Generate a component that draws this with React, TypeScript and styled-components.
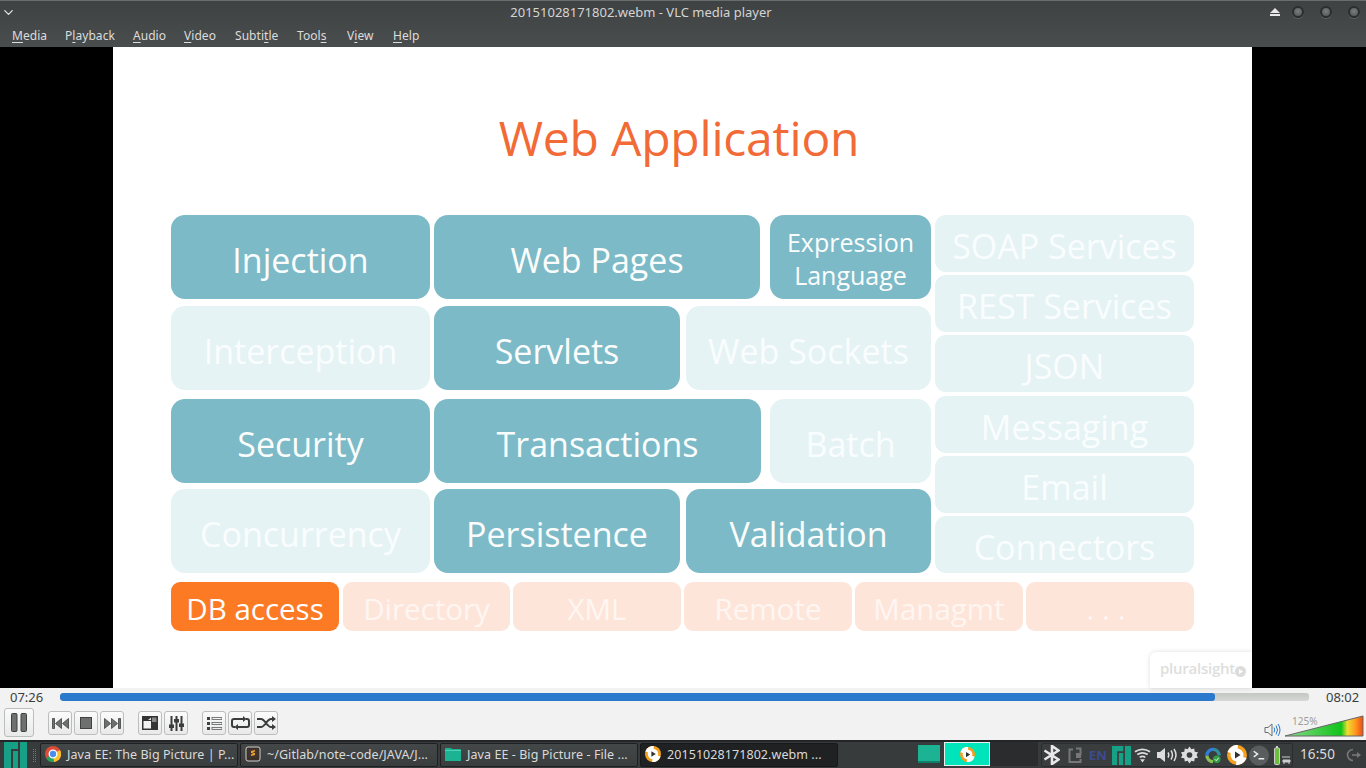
import React from 'react';
import styled, { createGlobalStyle } from 'styled-components';
import { ChevronDown } from 'lucide-react';

const Global = createGlobalStyle`
  html, body { margin: 0; padding: 0; height: 100%; overflow: hidden; background: #000; }
  #root { height: 100%; }
  * { box-sizing: border-box; }
`;
const UI = `"Noto Sans", "Liberation Sans", sans-serif`;
const SLIDE = `"Open Sans", "Noto Sans", sans-serif`;

const Page = styled.div`display:flex;flex-direction:column;width:1366px;height:768px;font-family:${UI};`;

const Header = styled.header`height:47px;background:linear-gradient(#3f4243,#4a4d4e);border-top:1px solid #6a6d6e;color:#e0e0e0;display:flex;flex-direction:column;`;
const TitleBar = styled.div`height:22px;display:flex;align-items:center;padding:0 0 0 1px;`;
const TitleText = styled.div`flex:1;text-align:center;font-size:13px;color:#d4d4d4;padding-right:4px;letter-spacing:-.01px;`;
const WinControls = styled.div`display:flex;align-items:center;gap:16px;padding-right:6px;`;
const Eject = styled.svg`margin-right:-4px;`;
const WinDot = styled.span`width:12px;height:12px;border-radius:50%;background:radial-gradient(circle at 50% 40%,#7a7d7e,#505354);border:2px solid #2b2d2e;box-shadow:0 1px 0 #5d6061;`;
const MenuBar = styled.nav`display:flex;padding:4px 0 0 12px;font-size:12px;color:#dcdcdc;`;
const MenuItem = styled.span<{ $w?: number }>`display:block;width:${p => (p.$w ? `${p.$w}px` : 'auto')};letter-spacing:.05px;`;
const Mn = styled.span`text-decoration:underline;text-underline-offset:2px;`;

const Stage = styled.main`height:641px;background:#000;display:flex;justify-content:flex-start;padding-left:113px;`;
const Slide = styled.section`width:1139px;background:#fff;display:flex;flex-direction:column;align-items:flex-start;padding:0 58px;font-family:${SLIDE};position:relative;`;
const SlideTitle = styled.h1`margin:59px 0 46px;width:1016px;text-align:center;height:63px;line-height:63px;font-size:48px;font-weight:400;color:#f26a36;letter-spacing:-.2px;`;
const Board = styled.div`width:1023px;display:flex;flex-direction:column;gap:9px;`;
const Upper = styled.div`display:flex;gap:4px;height:358px;`;
const Left = styled.div`width:760px;display:flex;flex-direction:column;`;
const Row = styled.div<{ $cols: string; $top?: number }>`display:grid;height:84px;grid-template-columns:${p => p.$cols};margin-top:${p => p.$top ?? 0}px;column-gap:4px;`;
const Right = styled.div`width:259px;display:flex;flex-direction:column;justify-content:space-between;`;
const Tile = styled.div<{ $on?: boolean; $small?: boolean; $gapL?: number }>`
  border-radius:14px;display:flex;align-items:center;justify-content:center;text-align:center;
  background:${p => (p.$on ? '#7dbac7' : '#e5f3f5')};
  color:${p => (p.$on ? '#fbfdfd' : '#fafdfd')};
  font-size:${p => (p.$small ? '25px' : '34px')};line-height:33px;
  margin-left:${p => p.$gapL ?? 0}px;padding-top:${p => (p.$small ? 3 : 7)}px;
`;
const SideTile = styled(Tile)`height:57px;border-radius:11px;font-size:34px;padding-top:6px;`;
const Bottom = styled.div`display:grid;grid-template-columns:repeat(6,168px);column-gap:3px;height:49px;`;
const Chip = styled.div<{ $on?: boolean; $spaced?: boolean }>`
  border-radius:9px;display:flex;align-items:center;justify-content:center;font-size:29.500px;padding-top:4px;
  letter-spacing:${p => (p.$spaced ? '8px' : '0')};
  background:${p => (p.$on ? '#fd7a24' : '#fee5da')};color:${p => (p.$on ? '#fff' : '#fff6f2')};
  &:nth-child(2){margin-left:1px;}
`;
const Watermark = styled.div`position:absolute;right:0;bottom:0;width:102px;height:36px;background:#fff;border-radius:6px 0 0 0;box-shadow:0 0 5px rgba(0,0,0,.13);display:flex;align-items:center;padding:0 0 4px 10px;font-size:15px;font-weight:600;color:#dedede;letter-spacing:-.25px;`;
const WatermarkMark = styled.svg`margin:7px 0 0 0;`;

const Controls = styled.section`height:52px;background:#f1f2f1;display:flex;flex-direction:column;`;
const SeekRow = styled.div`height:18px;display:flex;align-items:center;padding:0 0 0 10px;font-size:13px;color:#3c3f40;`;
const Time = styled.span`width:50px;`;
const TimeEnd = styled.span`margin-left:17px;`;
const Track = styled.div`flex:0 0 1249px;height:8px;border-radius:3px;background:linear-gradient(#c4c6c4,#d6d8d6);overflow:hidden;`;
const Fill = styled.div`height:100%;background:#2a79cd;border-radius:3px;`;
const ButtonRow = styled.div`flex:1;display:flex;align-items:flex-start;padding:2px 0 0 4px;`;
const Btn = styled.button<{ $big?: boolean; $ml?: number }>`
  width:${p => (p.$big ? 30 : 24)}px;height:${p => (p.$big ? 29 : 24)}px;margin:${p => (p.$big ? 0 : 3)}px 0 0 ${p => p.$ml ?? 2}px;padding:0;
  border:1px solid #bcbebc;border-radius:3px;background:linear-gradient(#fbfbfb,#e8e9e8);display:flex;align-items:center;justify-content:center;
`;
const Volume = styled.div`margin-left:auto;position:relative;display:flex;align-items:flex-end;gap:3px;height:30px;padding:0 2px 1px 0;`;
const VolPct = styled.span`position:absolute;left:28px;top:6px;font-size:10px;color:#9d9d9d;`;

const Taskbar = styled.footer`height:28px;background:#383b3c;border-top:2px solid #232526;display:flex;align-items:center;font-size:12.500px;color:#dadada;`;
const StartBtn = styled.div`width:23px;height:26px;margin-left:4px;display:flex;`;
const Handle = styled.div`width:3px;height:13px;margin:0 4px 0 6px;border-left:1px dotted #777;border-right:1px dotted #777;`;
const Task = styled.div<{ $active?: boolean }>`
  width:198px;height:24px;margin-right:2px;display:flex;align-items:center;gap:6px;padding:0 0 2px 4px;border-radius:2px;white-space:nowrap;overflow:hidden;
  border:1px solid ${p => (p.$active ? '#171819' : '#1e2021')};
  background:${p => (p.$active ? '#1f2122' : 'linear-gradient(#454849,#3a3d3e)')};
  letter-spacing:.07px;
`;
const Pager = styled.div`margin-left:74px;display:flex;height:24px;align-self:flex-start;`;
const PageCell = styled.div<{ $w: number; $on?: boolean }>`
  width:${p => p.$w}px;height:24px;display:flex;align-items:center;justify-content:center;
  ${p => (p.$on ? 'background:#00e4bb;border:1px solid #e8f0ee;' : '')}
`;
const PageBlank = styled.div`width:48px;height:24px;background:#2a2c2d;`;
const Tray = styled.div`margin-left:3px;width:252px;height:24px;flex:none;border:1px solid #2a2c2d;border-radius:2px;background:#3a3d3e;display:flex;align-items:center;padding-left:1px;`;
const TrayIcon = styled.span<{ $ml?: number; $w: number }>`display:flex;justify-content:center;width:${p => p.$w}px;margin-left:${p => p.$ml ?? 0}px;`;
const TrayEn = styled.span`font-size:13px;font-weight:700;color:#3d4a8f;letter-spacing:.4px;`;
const Clock = styled.span`margin:0 0 2px 7px;font-size:13.500px;color:#dcdcdc;letter-spacing:.1px;`;
const Logout = styled.span`margin-left:11px;display:flex;`;

const ifill = '#6d706e';
const istroke = '#3f4240';

const PlayDisc = ({ s = 20 }: { s?: number }) => (
  <svg width={s} height={s} viewBox="0 0 20 20">
    <circle cx="10" cy="10" r="10" fill="#f5a01e" />
    <path d="M10 10L.5 7A10 10 0 0 1 11 0z" fill="#fff" />
    <path d="M10 10l9.500 3A10 10 0 0 1 9 20z" fill="#fff" />
    <circle cx="10" cy="10" r="6.500" fill="#fff" />
    <path d="M8 6.500l5.500 3.500-5.500 3.500z" fill="#333" />
  </svg>
);
const Folder = ({ w = 16, h = 15 }: { w?: number; h?: number }) => (
  <svg width={w} height={h} viewBox="0 0 16 15">
    <path d="M0 2q0-1 1-1h5l1 1h8q1 0 1 1v11H0z" fill="#1cb394" />
    <rect y="3" width="16" height="1" fill="#4fd0b5" />
  </svg>
);

export default function App() {
  return (
    <Page>
      <Global />
      <Header>
        <TitleBar>
          <ChevronDown size={15} color="#e6e6e6" strokeWidth={2} />
          <TitleText>20151028171802.webm - VLC media player</TitleText>
          <WinControls>
            <Eject width="10" height="8" viewBox="0 0 10 8"><path d="M5 0l5 5H0zM0 6h10v2H0z" fill="#e8e8e8" /></Eject>
            <WinDot /><WinDot /><WinDot />
          </WinControls>
        </TitleBar>
        <MenuBar>
          <MenuItem $w={53}><Mn>M</Mn>edia</MenuItem>
          <MenuItem $w={68}>P<Mn>l</Mn>ayback</MenuItem>
          <MenuItem $w={51}><Mn>A</Mn>udio</MenuItem>
          <MenuItem $w={51}><Mn>V</Mn>ideo</MenuItem>
          <MenuItem $w={62}>Subti<Mn>t</Mn>le</MenuItem>
          <MenuItem $w={50}>Tool<Mn>s</Mn></MenuItem>
          <MenuItem $w={46}>V<Mn>i</Mn>ew</MenuItem>
          <MenuItem><Mn>H</Mn>elp</MenuItem>
        </MenuBar>
      </Header>
      <Stage>
        <Slide>
          <SlideTitle>Web Application</SlideTitle>
          <Board>
            <Upper>
              <Left>
                <Row $cols="259px 326px 167px">
                  <Tile $on>Injection</Tile><Tile $on>Web Pages</Tile>
                  <Tile $on $small $gapL={6}>Expression<br />Language</Tile>
                </Row>
                <Row $cols="259px 246px 247px" $top={7}>
                  <Tile>Interception</Tile><Tile $on>Servlets</Tile><Tile $gapL={2}>Web Sockets</Tile>
                </Row>
                <Row $cols="259px 327px 166px" $top={9}>
                  <Tile $on>Security</Tile><Tile $on>Transactions</Tile><Tile $gapL={5}>Batch</Tile>
                </Row>
                <Row $cols="259px 246px 247px" $top={6}>
                  <Tile>Concurrency</Tile><Tile $on>Persistence</Tile><Tile $on $gapL={2}>Validation</Tile>
                </Row>
              </Left>
              <Right>
                <SideTile>SOAP Services</SideTile>
                <SideTile>REST Services</SideTile>
                <SideTile>JSON</SideTile>
                <SideTile>Messaging</SideTile>
                <SideTile>Email</SideTile>
                <SideTile>Connectors</SideTile>
              </Right>
            </Upper>
            <Bottom>
              <Chip $on>DB access</Chip><Chip>Directory</Chip><Chip>XML</Chip><Chip>Remote</Chip><Chip>Managmt</Chip><Chip $spaced>...</Chip>
            </Bottom>
          </Board>
          <Watermark>
            pluralsight
            <WatermarkMark width="11" height="11" viewBox="0 0 11 11"><circle cx="5.500" cy="5.500" r="5.500" fill="#dcdcdc" /><path d="M4 3l4 2.500L4 8z" fill="#fff" /></WatermarkMark>
          </Watermark>
        </Slide>
      </Stage>
      <Controls>
        <SeekRow>
          <Time>07:26</Time>
          <Track><Fill style={{ width: `${(1155 / 1249) * 100}%` }} /></Track>
          <TimeEnd>08:02</TimeEnd>
        </SeekRow>
        <ButtonRow>
          <Btn $big $ml={0}><svg width="16" height="19" viewBox="0 0 16 19"><rect x="0.500" y="0.500" width="5.500" height="18" rx="1" fill={ifill} stroke={istroke} /><rect x="10" y="0.500" width="5.500" height="18" rx="1" fill={ifill} stroke={istroke} /></svg></Btn>
          <Btn $ml={14}><svg width="17" height="11" viewBox="0 0 17 11" stroke={istroke} strokeWidth=".8" fill={ifill}><path d="M.5.500h2v10h-2zM9.500.500v10l-6-5zM16.500.500v10l-6-5z" /></svg></Btn>
          <Btn><svg width="12" height="12" viewBox="0 0 12 12"><rect x=".5" y=".5" width="11" height="11" fill={ifill} stroke={istroke} /></svg></Btn>
          <Btn><svg width="17" height="11" viewBox="0 0 17 11" stroke={istroke} strokeWidth=".8" fill={ifill}><path d="M16.500.500h-2v10h2zM7.500.500v10l6-5zM.5.500v10l6-5z" /></svg></Btn>
          <Btn $ml={14}><svg width="16" height="14" viewBox="0 0 16 14"><rect width="16" height="14" fill="#333" /><rect x="1.500" y="5" width="7.500" height="7.500" fill="#f1f1f1" /><rect x="10" y="1.500" width="4.500" height="4.500" fill="#888" /><path d="M6 4l3-2.500V4z" fill="#ddd" /></svg></Btn>
          <Btn><svg width="15" height="15" viewBox="0 0 15 15" fill="none" stroke="#3a3d3c"><path d="M2.500 0v15M7.500 0v15M12.500 0v15" strokeWidth="2" /><rect x="0.500" y="9" width="4" height="2.500" fill="#3a3d3c" /><rect x="5.500" y="3.500" width="4" height="2.500" fill="#3a3d3c" /><rect x="10.500" y="8" width="4" height="2.500" fill="#3a3d3c" /></svg></Btn>
          <Btn $ml={14}><svg width="15" height="13" viewBox="0 0 15 13" fill="#3f4241"><rect y="0" width="3" height="3" /><rect y="5" width="3" height="3" /><rect y="10" width="3" height="3" /><rect x="5" y="0.500" width="10" height="2" fill="none" stroke="#5a5d5b" strokeWidth=".8" /><rect x="5" y="5.500" width="10" height="2" fill="none" stroke="#5a5d5b" strokeWidth=".8" /><rect x="5" y="10.500" width="10" height="2" fill="none" stroke="#5a5d5b" strokeWidth=".8" /></svg></Btn>
          <Btn><svg width="19" height="14" viewBox="0 0 19 14" fill="none" stroke="#3a3d3c" strokeWidth="2"><path d="M4 11H3a2 2 0 0 1-2-2V5a2 2 0 0 1 2-2h10" /><path d="M15 3h1a2 2 0 0 1 2 2v4a2 2 0 0 1-2 2H6" /><path d="M12 0l3.500 3-3.500 3zM7 8l-3.500 3L7 14z" fill="#3a3d3c" stroke="none" /></svg></Btn>
          <Btn><svg width="19" height="14" viewBox="0 0 19 14" fill="none" stroke="#3a3d3c" strokeWidth="2"><path d="M0 3h4c4 0 6 8 10 8h2M0 11h4c4 0 6-8 10-8h2" /><path d="M15 0l4 3-4 3zM15 8l4 3-4 3z" fill="#3a3d3c" stroke="none" /></svg></Btn>
          <Volume>
            <VolPct>125%</VolPct>
            <svg width="17" height="14" viewBox="0 0 17 14" fill="none"><path d="M1 4.500h3l4-3.500v12L4 9.500H1z" stroke="#6b6e6c" /><path d="M10 4.500q1.500 2.500 0 5" stroke="#2a79cd" /><path d="M12 2.500q3 4.500 0 9" stroke="#2a79cd" /><path d="M14 1q4 6 0 12" stroke="#2a79cd" /></svg>
            <svg width="80" height="22" viewBox="0 0 80 22">
              <defs><linearGradient id="vol" x1="0" x2="1" y1="0" y2="0"><stop offset="0" stopColor="#8fd88f" /><stop offset=".72" stopColor="#10c41a" /><stop offset=".8" stopColor="#f0dc30" /><stop offset=".9" stopColor="#ff9a1e" /><stop offset="1" stopColor="#f04a12" /></linearGradient></defs>
              <path d="M1 21L79 1v20z" fill="url(#vol)" stroke="#666" strokeWidth="1" />
            </svg>
          </Volume>
        </ButtonRow>
      </Controls>
      <Taskbar>
        <StartBtn>
          <svg width="23" height="26" viewBox="0 0 23 26" fill="#16a085"><path d="M0 0h14v7H7v19H0zM9 9h5v17H9zM16 0h7v26h-7z" /></svg>
        </StartBtn>
        <Handle />
        <Task>
          <svg width="16" height="16" viewBox="0 0 16 16"><circle cx="8" cy="8" r="8" fill="#dd4b39" /><path d="M8 8L1 12a8 8 0 0 0 8 4z" fill="#1ea362" /><path d="M8 8l1 8a8 8 0 0 0 6-12z" fill="#fbc02d" /><circle cx="8" cy="8" r="3.800" fill="#4a8df0" stroke="#fff" strokeWidth="1.300" /></svg>
          Java EE: The Big Picture | P...
        </Task>
        <Task>
          <svg width="16" height="16" viewBox="0 0 16 16"><rect x="1" y="1" width="14" height="14" rx="2" fill="#3b3028" stroke="#cfcfcf" /><rect x="3" y="3" width="10" height="8" fill="#40352c" /><path d="M6 5l4-1v1.500L7.500 6.500 10 7v2L6 10V8.500l2.500-1L6 7z" fill="#f0a030" /></svg>
          ~/Gitlab/note-code/JAVA/J...
        </Task>
        <Task>
          <Folder />
          Java EE - Big Picture - File ...
        </Task>
        <Task $active>
          <PlayDisc s={16} />
          20151028171802.webm ...
        </Task>
        <Pager>
          <PageCell $w={30}><svg width="22" height="18" viewBox="0 0 22 18"><rect width="22" height="16" fill="#1cb394" /><rect y="16" width="22" height="2" fill="#0f7f6a" /></svg></PageCell>
          <PageCell $w={46} $on><PlayDisc s={15} /></PageCell>
          <PageBlank />
        </Pager>
        <Tray>
          <TrayIcon $w={17}><svg width="17" height="20" viewBox="0 0 17 20" fill="none" stroke="#e8e8e8" strokeWidth="2.600"><path d="M1.500 5.500l14 9-6.500 4.500V1l6.500 4.500-14 9" /></svg></TrayIcon>
          <TrayIcon $ml={8} $w={14}><svg width="14" height="16" viewBox="0 0 14 16" fill="none" stroke="#777" strokeWidth="2"><path d="M5 2.500H1.500V15h11v-3" /><path d="M8 1.500h4.500v7" /><rect x="8" y="6" width="5" height="5" fill="#777" stroke="none" /></svg></TrayIcon>
          <TrayIcon $ml={7} $w={18}><TrayEn>EN</TrayEn></TrayIcon>
          <TrayIcon $ml={5} $w={19}><svg width="19" height="19" viewBox="0 0 22 22" fill="#16a085"><path d="M0 0h13v6H6v16H0zM8 8h5v14H8zM15 0h7v22h-7z" /></svg></TrayIcon>
          <TrayIcon $ml={3} $w={17}><svg width="18" height="15" viewBox="0 0 18 15" fill="none" stroke="#ddd" strokeWidth="1.800"><path d="M1 3.500q8-5 16 0M3.500 6.500q5.500-3.500 11 0M6 9.500q3-2 6 0" /><path d="M6.500 11.500h5L9 15z" fill="#ddd" stroke="none" /></svg></TrayIcon>
          <TrayIcon $ml={6} $w={20}><svg width="20" height="14" viewBox="0 0 20 14" fill="none" stroke="#ddd" strokeWidth="1.500"><path d="M0 4h3l5-4v14l-5-4H0z" fill="#ddd" stroke="none" /><path d="M11 4.500q1.500 2.500 0 5M14 2.500q3 4.500 0 9M17 1q4 6 0 12" /></svg></TrayIcon>
          <TrayIcon $ml={4} $w={17}><svg width="18" height="18" viewBox="0 0 18 18"><path d="M9 0l2 3 3-1 .5 3.500L18 6l-1.500 3L18 12l-3.500.5L14 16l-3-1-2 3-2-3-3 1-.5-3.500L0 12l1.500-3L0 6l3.500-.5L4 2l3 1z" fill="#ddd" /><circle cx="9" cy="9" r="3" fill="#3a3d3e" /></svg></TrayIcon>
          <TrayIcon $ml={7} $w={16}><svg width="17" height="17" viewBox="0 0 17 17" fill="none" strokeWidth="3.500"><path d="M8.500 2a6.500 6.500 0 0 1 6.500 6.500" stroke="#2f8f9d" /><path d="M8.500 15A6.500 6.500 0 0 1 2 8.500" stroke="#8cc152" /><path d="M2 8.500A6.500 6.500 0 0 1 8.500 2" stroke="#2f7fd8" /><circle cx="12.500" cy="12.500" r="4" fill="#2f9e44" stroke="none" /><path d="M10.500 12.500l1.500 1.500 2.500-3" stroke="#fff" strokeWidth="1" /></svg></TrayIcon>
          <TrayIcon $ml={6} $w={20}><PlayDisc /></TrayIcon>
          <TrayIcon $ml={2} $w={20}><svg width="21" height="21" viewBox="0 0 21 21"><circle cx="10.500" cy="10.500" r="10.500" fill="#5a5d5e" /><path d="M5 6l4 3-4 3M10 14h6" fill="none" stroke="#eee" strokeWidth="1.500" /></svg></TrayIcon>
          <TrayIcon $ml={5} $w={17}><svg width="17" height="20" viewBox="0 0 17 20"><rect x="0.500" y="3" width="5" height="16.500" rx="1" fill="#6bbf3b" stroke="#ccc" /><rect x="2" y="1" width="2" height="2" fill="#ccc" /><path d="M8 12h8M9 15h7v2H9zM10 17v2M15 17v2" stroke="#ccc" fill="#ccc" /></svg></TrayIcon>
        </Tray>
        <Clock>16:50</Clock>
        <Logout>
          <svg width="16" height="14" viewBox="0 0 16 14" fill="none" stroke="#777" strokeWidth="1.600"><path d="M7 1.500A5.500 5.500 0 0 0 7 12.500" /><path d="M6 7h8" /><path d="M11 4l4 3-4 3z" fill="#777" stroke="none" /></svg>
        </Logout>
      </Taskbar>
    </Page>
  );
}
